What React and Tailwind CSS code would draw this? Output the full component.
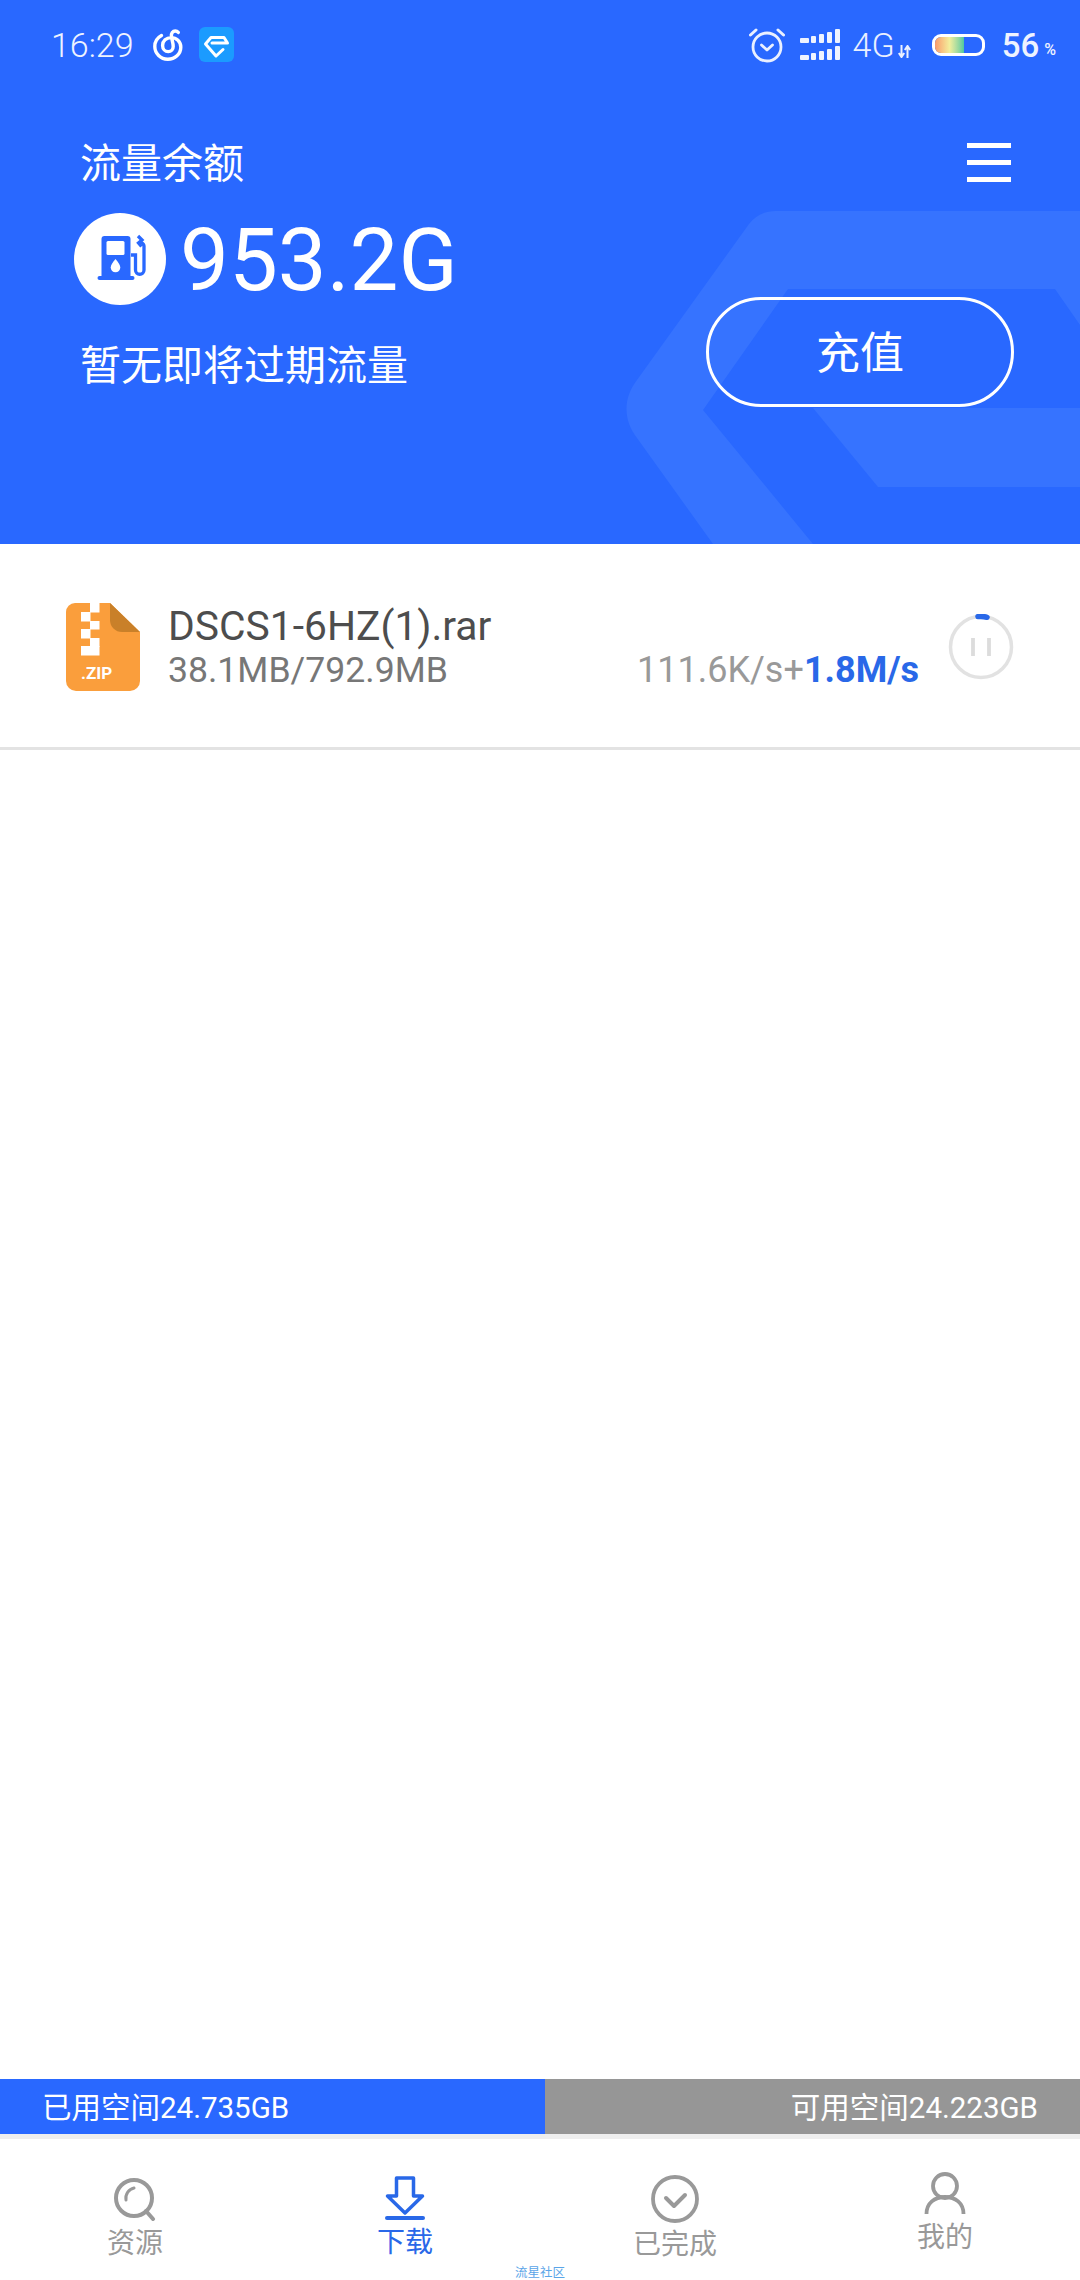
import React from "react";

const cjk = { fontFamily: "Roboto, 'Noto Sans CJK SC', sans-serif" };

function NeteaseIcon() {
  return (
    <svg width="30" height="33" viewBox="0 0 30 33" fill="none" stroke="#fff" strokeWidth="3.4" strokeLinecap="round">
      <path d="M8.500 7.500C4.200 9.800 1.800 13.800 1.800 18.500c0 7 5.800 12.700 13 12.700s13-5.300 13-12c0-5.600-4.400-9.600-9.600-9.600-5 0-8.600 3.400-8.600 7.800 0 3.600 2.600 6.200 5.600 6.200 3 0 5-2.300 5-5.200 0-3.600-1.400-6.600-1.800-10-.3-3 1.300-5.400 3.900-5.400 1.300 0 2.200.5 3 1.400" />
    </svg>
  );
}

function TileIcon() {
  return (
    <svg width="35" height="35" viewBox="0 0 35 35" fill="none">
      <rect width="35" height="35" rx="6" fill="#1b9bff" />
      <path d="M28.500 16H13M28.500 16 25 10.500H12L6.500 17 17 29l7-6.500" stroke="#fff" strokeWidth="3" strokeLinejoin="round" strokeLinecap="round" />
    </svg>
  );
}

function AlarmIcon() {
  return (
    <svg width="36" height="36" viewBox="0 0 36 36" fill="none" stroke="#eaf0ff" strokeWidth="2.8" strokeLinecap="round" strokeLinejoin="round">
      <circle cx="18" cy="20" r="14" />
      <path d="M1.500 8 7 3M34.500 8 29 3" strokeWidth="3" />
      <path d="m12.500 18 5.500 5 5.500-5" />
    </svg>
  );
}

function SignalIcon() {
  const heights = [5, 7, 9, 11, 14];
  const xs = [0, 11, 19, 27, 35];
  const widths = [9, 5, 5, 5, 5];
  return (
    <svg width="40" height="32" viewBox="0 0 40 32" fill="#eef3ff">
      {heights.map((h, i) => (
        <rect key={"a" + i} x={xs[i]} y={14 - h} width={widths[i]} height={h} rx="1" />
      ))}
      {heights.map((h, i) => (
        <rect key={"b" + i} x={xs[i]} y={31 - h} width={widths[i]} height={h} rx="1" />
      ))}
    </svg>
  );
}

function ArrowsIcon() {
  return (
    <svg width="13" height="13" viewBox="0 0 13 13" fill="none" stroke="#eaf0ff" strokeWidth="2">
      <path d="M3.500 0v11M0.800 8l2.700 4 2.700-4" />
      <path d="M9.500 13V2M6.800 5l2.700-4 2.700 4" />
    </svg>
  );
}

function FuelIcon() {
  return (
    <svg width="54" height="54" viewBox="0 0 54 54" fill="none">
      <path d="M5.500 7a3 3 0 0 1 3-3h23a3 3 0 0 1 3 3v39h-29z" fill="#2968ff" />
      <rect x="1.500" y="44" width="37" height="4" rx="2" fill="#2968ff" />
      <rect x="10.500" y="9" width="18" height="14" rx="1.500" fill="#fff" />
      <path d="M19.500 27c3 3.700 4.800 6 4.800 8.500a4.800 4.800 0 0 1-9.600 0c0-2.500 1.800-4.800 4.800-8.500z" fill="#fff" />
      <path d="M35 23h4.500v15a4 4 0 0 0 8.500 0V14c0-2-1.500-3-3.500-4" stroke="#2968ff" strokeWidth="3.300" />
      <path d="M42 4l4 4-3.500 3 3 3.500" stroke="#2968ff" strokeWidth="3.300" />
    </svg>
  );
}

function ZipIcon() {
  const squares = [
    [24, 0, 9.5, 9.5],
    [15, 9, 9.5, 9.5],
    [24, 18, 9.5, 8.5],
    [15, 26, 9.5, 9.5],
    [24, 35, 9.5, 9],
    [15, 43, 18.5, 9.5],
  ];
  return (
    <svg width="74" height="88" viewBox="0 0 74 88">
      <path d="M9 0h35l30 29v49a10 10 0 0 1-10 10H10A10 10 0 0 1 0 78V9a9 9 0 0 1 9-9z" fill="#fa9e3c" />
      <path d="M44 0l30 29H56a12 12 0 0 1-12-12z" fill="#c98029" />
      {squares.map(([x, y, w, h], i) => (
        <rect key={i} x={x} y={y} width={w} height={h} fill="#fff" />
      ))}
      <text x="15" y="76" fill="#fff" fontSize="17" fontWeight="700" fontFamily="Roboto, sans-serif">.ZIP</text>
    </svg>
  );
}

function PauseRing() {
  return (
    <svg width="66" height="66" viewBox="0 0 66 66" fill="none">
      <circle cx="33" cy="33" r="30.500" stroke="#e2e2e2" strokeWidth="3.500" />
      <path d="M25 24v18M41 24v18" stroke="#dcdcdc" strokeWidth="3.800" />
      <path d="M30 2.600c3-.4 6-.2 9 .7" stroke="#2968e8" strokeWidth="5.500" strokeLinecap="round" />
    </svg>
  );
}

function SearchTab() {
  return (
    <svg width="42" height="43" viewBox="0 0 42 43" fill="none" stroke="#999" strokeWidth="4">
      <circle cx="20" cy="20" r="18" />
      <path d="M12 22c-1-6 3-11 8-12" strokeWidth="3" strokeLinecap="round" />
      <path d="m32 33 7 8" strokeWidth="4" strokeLinecap="round" />
    </svg>
  );
}

function DownloadTab() {
  return (
    <svg width="42" height="44" viewBox="0 0 42 44" fill="none" stroke="#2968e8">
      <path d="M12.500 2h17v18h9L21 37 3.500 20h9z" strokeWidth="3.500" strokeLinejoin="round" />
      <path d="M3 42h36" strokeWidth="4" strokeLinecap="round" />
    </svg>
  );
}

function CheckTab() {
  return (
    <svg width="48" height="48" viewBox="0 0 48 48" fill="none" stroke="#999" strokeWidth="3.800">
      <circle cx="24" cy="24" r="22" />
      <path d="m15 23 8 8 11-11" strokeWidth="4" strokeLinecap="round" strokeLinejoin="round" />
    </svg>
  );
}

function PersonTab() {
  return (
    <svg width="42" height="43" viewBox="0 0 42 43" fill="none" stroke="#999" strokeWidth="3.800">
      <circle cx="21" cy="14" r="12" />
      <path d="M2.500 42c0-11 8-17 18.500-17s18.500 6 18.500 17" />
    </svg>
  );
}

function Tab({ icon, label, color, iconBox }) {
  return (
    <div className="flex flex-col items-center">
      <div className={iconBox}>{icon}</div>
      <span className={`text-[28px] leading-[34px] ${color}`}>{label}</span>
    </div>
  );
}

export default function App() {
  return (
    <div className="w-[1080px] h-[2280px] bg-white flex flex-col overflow-hidden relative" style={cjk}>
      <header className="relative h-[544px] bg-[#2968ff] text-white overflow-hidden shrink-0">
        <svg className="absolute left-0 top-0" width="1080" height="544" viewBox="0 0 1080 544" fill="#3673ff">
          <path d="M1080 211H776c-11 0-20 4-27 13L637 380c-14 18-14 40 0 58l76 106h100L703 410l85-121h267l25 36z" />
          <path d="M813 408h267v79H878z" />
        </svg>

        <div className="relative flex items-center h-[90px] pl-[51px] pr-[24px]">
          <span className="text-[34px] leading-none font-light text-[#eef3ff] mr-[19px]">16:29</span>
          <div className="mr-[16px] -mt-[2px]"><NeteaseIcon /></div>
          <div className="-mt-[1px]"><TileIcon /></div>
          <div className="flex-1" />
          <div className="mr-[15px] -mt-[1px]"><AlarmIcon /></div>
          <div className="mr-[13px]"><SignalIcon /></div>
          <span className="text-[34px] leading-none font-light text-[#eaf0ff] mr-[3px]">4G</span>
          <div className="mt-[12px] mr-[21px]"><ArrowsIcon /></div>
          <div className="w-[53px] h-[22px] border-[3px] border-white rounded-[9px] mr-[17px] overflow-hidden">
            <div className="w-[29px] h-full bg-gradient-to-r from-[#f79a6b] via-[#f2ee9c] to-[#4cc9a0]" />
          </div>
          <span className="text-[33px] leading-none font-medium text-[#eef3ff] mr-[5px]">56</span>
          <span className="text-[16px] leading-none font-medium text-[#eef3ff] mt-[10px]">%</span>
        </div>

        <div className="relative flex justify-between pl-[74px] pr-[66px]">
          <div className="flex flex-col items-start">
            <div className="mt-[46px] ml-[6px] text-[41px] leading-[56px]">流量余额</div>
            <div className="mt-[20px] flex items-center">
              <div className="w-[92px] h-[92px] rounded-full bg-white flex items-center justify-center pl-[5px]">
                <FuelIcon />
              </div>
              <span className="ml-[14px] mt-[2px] text-[87px] leading-[92px]">953.2G</span>
            </div>
            <div className="mt-[32px] ml-[6px] text-[41px] leading-[56px]">暂无即将过期流量</div>
          </div>
          <div className="flex flex-col items-end">
            <div className="mt-[53px] mr-[3px] flex flex-col gap-[12px] w-[44px]">
              <div className="h-[5px] bg-white" />
              <div className="h-[5px] bg-white" />
              <div className="h-[5px] bg-white" />
            </div>
            <div className="mt-[115px] w-[308px] h-[110px] rounded-full border-[3px] border-white flex items-center justify-center text-[44px] pt-[4px]">
              充值
            </div>
          </div>
        </div>
      </header>

      <section className="h-[206px] border-b-[3px] border-[#e3e3e3] flex pl-[66px] pr-[66px] shrink-0">
        <div className="mt-[59px]"><ZipIcon /></div>
        <div className="ml-[28px] mt-[58px] w-[260px] shrink-0">
          <div className="text-[40.800px] leading-[49px] text-[#4d4d4d] whitespace-nowrap">DSCS1-6HZ(1).rar</div>
          <div className="text-[35.600px] leading-[39px] text-[#777] whitespace-nowrap">38.1MB/792.9MB</div>
        </div>
        <div className="flex-1 flex justify-end items-start">
          <div className="mt-[107px] text-[36px] leading-[39px] text-[#999] whitespace-nowrap">
            111.6K/s+<span className="font-bold text-[#2968e8]">1.8M/s</span>
          </div>
          <div className="ml-[29px] mt-[70px]"><PauseRing /></div>
        </div>
      </section>

      <div className="flex-1" />

      <div className="flex h-[55px] text-white text-[29.500px] leading-[59px] shrink-0">
        <div className="w-[545px] bg-[#2968ff] pl-[42px]">已用空间24.735GB</div>
        <div className="flex-1 bg-[#969696] pr-[42px] text-right">可用空间24.223GB</div>
      </div>
      <div className="h-[5px] bg-[#eeeeee] shrink-0" />

      <nav className="relative h-[141px] grid grid-cols-4 shrink-0">
        <Tab icon={<SearchTab />} label="资源" color="text-[#999]" iconBox="mt-[39px] mb-[6px]" />
        <Tab icon={<DownloadTab />} label="下载" color="text-[#2968e8]" iconBox="mt-[37px] mb-[6px]" />
        <Tab icon={<CheckTab />} label="已完成" color="text-[#999]" iconBox="mt-[36px] mb-[5px]" />
        <Tab icon={<PersonTab />} label="我的" color="text-[#999]" iconBox="mt-[33px] mb-[6px]" />
        <span className="absolute left-[515px] bottom-0 text-[12.500px] leading-[14px] text-[#5aa5e8]">流星社区</span>
      </nav>
    </div>
  );
}
